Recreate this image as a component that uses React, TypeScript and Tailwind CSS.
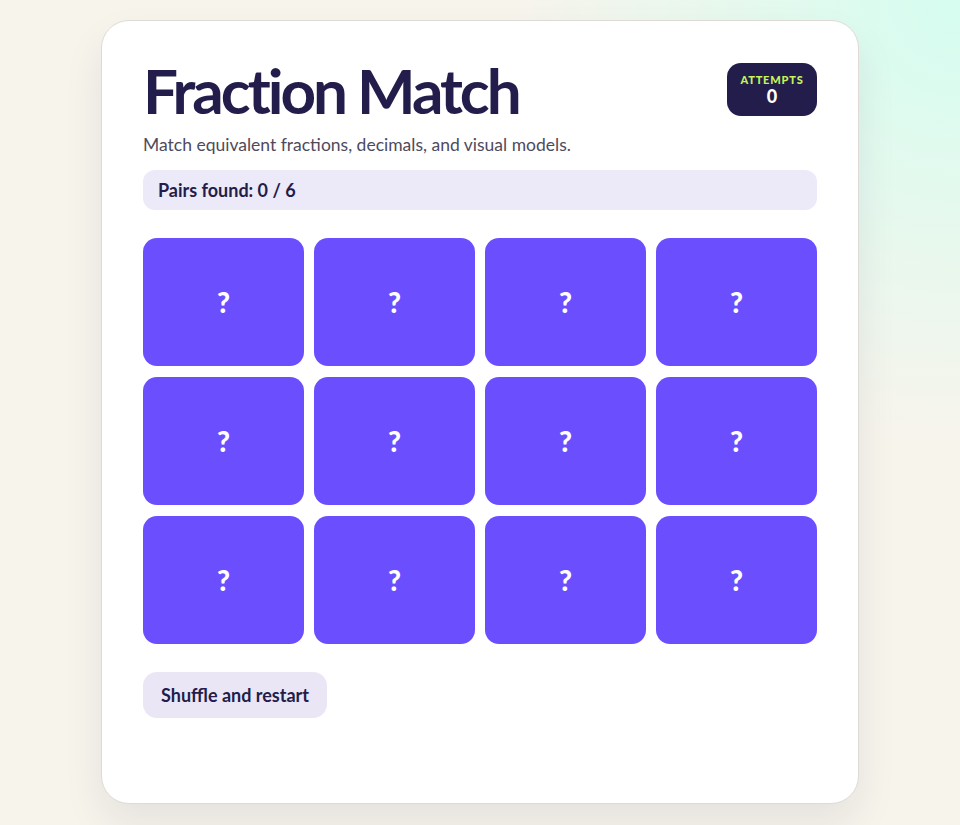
import React from 'react';

export default function App() {
  const cards = Array.from({ length: 12 }, (_, i) => i);

  return (
    <div
      className="min-h-screen w-full bg-[#f7f4ec] flex justify-center pt-[20px] pb-[21px]"
      style={{ backgroundImage: 'radial-gradient(circle at 100% 0%, #d5fdf0 0%, rgba(247,244,236,0) 35%)' }}
    >
      <div
        className="w-[758px] h-[784px] bg-white rounded-[28px] border border-[#dedbd6] shadow-[0_20px_40px_rgba(30,25,60,0.08)] px-[41px] pt-[38px]"
        style={{ fontFamily: 'Lato, "Noto Sans", sans-serif' }}
      >
        <div className="flex items-start justify-between">
          <h1 className="text-[62px] leading-[62px] font-bold text-[#221d4a] tracking-[-3px]">Fraction Match</h1>
          <div className="mt-[4px] w-[90px] h-[53px] rounded-[14px] bg-[#221d4a] flex flex-col items-center justify-center">
            <span className="text-[11px] leading-[13px] font-black tracking-[0.8px] text-[#c6f25c]">ATTEMPTS</span>
            <span className="text-[18px] leading-[20px] font-black text-white">0</span>
          </div>
        </div>
        <p className="mt-[13px] text-[17.5px] leading-[22px] text-[#4e4a5e]">Match equivalent fractions, decimals, and visual models.</p>
        <div className="mt-[14px] h-[40px] rounded-[12px] bg-[#ece9f9] flex items-center px-[15px]">
          <span className="text-[18px] font-bold text-[#221d4a]">Pairs found: 0 / 6</span>
        </div>
        <div className="mt-[28px] grid grid-cols-4 gap-x-[10px] gap-y-[11px]">
          {cards.map(i => (
            <button
              key={i}
              className="h-[128px] rounded-[14px] bg-[#6b4fff] flex items-center justify-center text-white text-[28px] font-black"
            >
              ?
            </button>
          ))}
        </div>
        <button className="mt-[28px] h-[46px] px-[18px] rounded-[14px] bg-[#ebe6f5] text-[18px] font-bold text-[#221d4a]">
          Shuffle and restart
        </button>
      </div>
    </div>
  );
}
